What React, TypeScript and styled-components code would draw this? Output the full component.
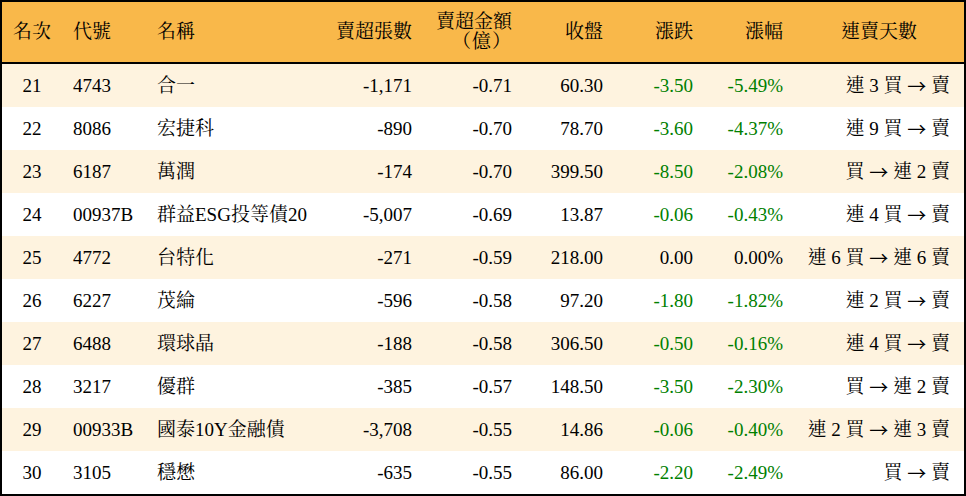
import React from "react";
import styled, { createGlobalStyle } from "styled-components";

const GlobalStyle = createGlobalStyle`
  html, body { margin: 0; padding: 0; background: #ffffff; }
  body {
    font-family: "Liberation Serif", "Noto Serif CJK TC", "Noto Sans CJK TC", serif;
    color: #000;
  }
`;

const COLS = "60px 84px 174px 103px 100px 91px 90px 90px 170px";

const Table = styled.div`
  width: 966px;
  box-sizing: border-box;
  border: 2px solid #000;
  font-size: 19px;
`;

const HeaderRow = styled.div`
  display: grid;
  grid-template-columns: ${COLS};
  height: 60px;
  background: #f9b84a;
  border-bottom: 2px solid #000;
`;

const Row = styled.div<{ $alt: boolean }>`
  display: grid;
  grid-template-columns: ${COLS};
  height: 43px;
  background: ${(p) => (p.$alt ? "#fef3df" : "#ffffff")};
`;

type Align = "left" | "center" | "right";

const Cell = styled.div<{ $align: Align; $tone?: "up" | "down" | "flat"; $pr?: number }>`
  display: flex;
  align-items: center;
  justify-content: ${(p) =>
    p.$align === "left" ? "flex-start" : p.$align === "center" ? "center" : "flex-end"};
  text-align: ${(p) => p.$align};
  padding: 0 ${(p) => p.$pr ?? 11}px 0 11px;
  white-space: nowrap;
  line-height: 20px;
  color: ${(p) => (p.$tone === "down" ? "#008000" : p.$tone === "up" ? "#d00000" : "#000")};
`;

const HeadCell = styled(Cell)`
  font-weight: normal;
`;

const HeadLines = styled.div`
  display: block;
  text-align: right;
  line-height: 20px;
`;

const Unit = styled.span`
  letter-spacing: 1px;
`;

const Arrow = styled.span`
  font-family: "Noto Sans CJK TC", sans-serif;
  font-size: 19px;
  line-height: 20px;
`;

type Item = {
  rank: number;
  code: string;
  name: string;
  shares: string;
  amount: string;
  close: string;
  change: string;
  pct: string;
  from: string;
  to: string;
};

const data: Item[] = [
  { rank: 21, code: "4743", name: "合一", shares: "-1,171", amount: "-0.71", close: "60.30", change: "-3.50", pct: "-5.49%", from: "連 3 買", to: "賣" },
  { rank: 22, code: "8086", name: "宏捷科", shares: "-890", amount: "-0.70", close: "78.70", change: "-3.60", pct: "-4.37%", from: "連 9 買", to: "賣" },
  { rank: 23, code: "6187", name: "萬潤", shares: "-174", amount: "-0.70", close: "399.50", change: "-8.50", pct: "-2.08%", from: "買", to: "連 2 賣" },
  { rank: 24, code: "00937B", name: "群益ESG投等債20", shares: "-5,007", amount: "-0.69", close: "13.87", change: "-0.06", pct: "-0.43%", from: "連 4 買", to: "賣" },
  { rank: 25, code: "4772", name: "台特化", shares: "-271", amount: "-0.59", close: "218.00", change: "0.00", pct: "0.00%", from: "連 6 買", to: "連 6 賣" },
  { rank: 26, code: "6227", name: "茂綸", shares: "-596", amount: "-0.58", close: "97.20", change: "-1.80", pct: "-1.82%", from: "連 2 買", to: "賣" },
  { rank: 27, code: "6488", name: "環球晶", shares: "-188", amount: "-0.58", close: "306.50", change: "-0.50", pct: "-0.16%", from: "連 4 買", to: "賣" },
  { rank: 28, code: "3217", name: "優群", shares: "-385", amount: "-0.57", close: "148.50", change: "-3.50", pct: "-2.30%", from: "買", to: "連 2 賣" },
  { rank: 29, code: "00933B", name: "國泰10Y金融債", shares: "-3,708", amount: "-0.55", close: "14.86", change: "-0.06", pct: "-0.40%", from: "連 2 買", to: "連 3 賣" },
  { rank: 30, code: "3105", name: "穩懋", shares: "-635", amount: "-0.55", close: "86.00", change: "-2.20", pct: "-2.49%", from: "買", to: "賣" },
];

const toneOf = (v: string): "up" | "down" | "flat" =>
  v.startsWith("-") ? "down" : parseFloat(v) > 0 ? "up" : "flat";

export default function App() {
  return (
    <>
      <GlobalStyle />
      <Table>
        <HeaderRow>
          <HeadCell $align="center">名次</HeadCell>
          <HeadCell $align="left">代號</HeadCell>
          <HeadCell $align="left">名稱</HeadCell>
          <HeadCell $align="right">賣超張數</HeadCell>
          <HeadCell $align="right">
            <HeadLines>
              賣超金額
              <br />
              <Unit>（億）</Unit>
            </HeadLines>
          </HeadCell>
          <HeadCell $align="right">收盤</HeadCell>
          <HeadCell $align="right">漲跌</HeadCell>
          <HeadCell $align="right">漲幅</HeadCell>
          <HeadCell $align="center">連賣天數</HeadCell>
        </HeaderRow>
        {data.map((d, i) => (
          <Row key={d.rank} $alt={i % 2 === 0}>
            <Cell $align="center">{d.rank}</Cell>
            <Cell $align="left">{d.code}</Cell>
            <Cell $align="left">{d.name}</Cell>
            <Cell $align="right">{d.shares}</Cell>
            <Cell $align="right">{d.amount}</Cell>
            <Cell $align="right">{d.close}</Cell>
            <Cell $align="right" $tone={toneOf(d.change)}>{d.change}</Cell>
            <Cell $align="right" $tone={toneOf(d.pct)}>{d.pct}</Cell>
            <Cell $align="right" $pr={14}>
              {d.from}&nbsp;<Arrow>→</Arrow>&nbsp;{d.to}
            </Cell>
          </Row>
        ))}
      </Table>
    </>
  );
}
